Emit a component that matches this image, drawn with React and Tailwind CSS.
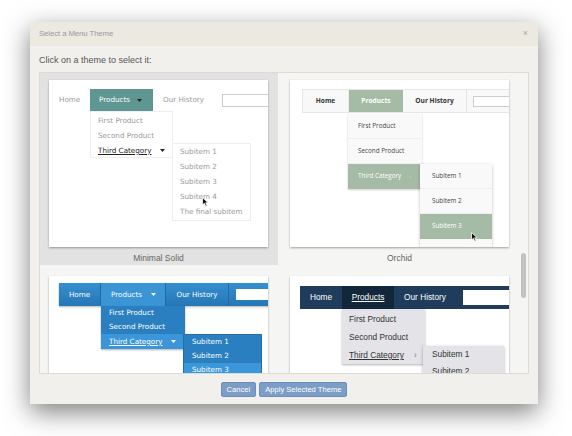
import React from "react";

const Cursor = ({ className }) => (
  <svg className={className} width="7" height="10" viewBox="0 0 7 10">
    <path d="M0.5 0.5 L0.5 8 L2.4 6.3 L3.7 9.3 L5 8.7 L3.7 5.8 L6.2 5.8 Z" fill="#111" stroke="#fff" strokeWidth="0.8" />
  </svg>
);

const Down = ({ color = "#333", className = "" }) => (
  <svg className={className} width="5" height="3" viewBox="0 0 5 3">
    <path d="M0 0 L5 0 L2.5 3 Z" fill={color} />
  </svg>
);

function MinimalSolid() {
  return (
    <div className="relative w-[219px] h-[167px] bg-white overflow-hidden shadow-[0_1px_2px_rgba(0,0,0,0.35)] font-['DejaVu_Sans',sans-serif] text-[7.2px] leading-none">
      <div className="flex items-center h-[22px] mt-[9px] pl-[10px]">
        <div className="w-[31px] shrink-0 text-[#999]">Home</div>
        <div className="w-[63px] shrink-0 h-full bg-[#5e9691] text-white flex items-center pl-[9px]">
          <span>Products</span>
          <Down color="#222" className="ml-[7px]" />
        </div>
        <div className="w-[69px] shrink-0 pl-[10px] text-[#999] whitespace-nowrap">Our History</div>
        <div className="w-[60px] shrink-0 h-[13px] border border-[#ccc] bg-white"></div>
      </div>
      <div className="absolute left-[41px] top-[31px] w-[83px] h-[47px] bg-white border border-[#eee] pt-[1px] text-[#999]">
        <div className="h-[15px] flex items-center pl-[7px]">First Product</div>
        <div className="h-[15px] flex items-center pl-[7px]">Second Product</div>
        <div className="h-[15px] flex items-center pl-[7px] text-[#222]">
          <span className="underline">Third Category</span>
          <Down color="#222" className="ml-[9px]" />
        </div>
      </div>
      <div className="absolute left-[123px] top-[63px] w-[79px] h-[78px] bg-white border border-[#eee] text-[#999]">
        <div className="h-[15px] flex items-center pl-[7px]">Subitem 1</div>
        <div className="h-[15px] flex items-center pl-[7px]">Subitem 2</div>
        <div className="h-[15px] flex items-center pl-[7px]">Subitem 3</div>
        <div className="h-[15px] flex items-center pl-[7px]">Subitem 4</div>
        <div className="h-[15px] flex items-center pl-[7px] whitespace-nowrap">The final subitem</div>
      </div>
      <Cursor className="absolute left-[153px] top-[117px]" />
    </div>
  );
}

function Orchid() {
  return (
    <div className="relative w-[219px] h-[167px] bg-white overflow-hidden shadow-[0_1px_2px_rgba(0,0,0,0.35)] font-['Open_Sans',sans-serif] text-[6.3px] leading-none">
      <div className="flex items-center h-[24px] mt-[9px] ml-[12px] w-[260px] bg-[#f8f8f8] border border-[#e6e6e6] font-bold text-[#333] text-[6.6px]">
        <div className="w-[46px] shrink-0 h-full flex items-center justify-center border-r border-[#ececec]">Home</div>
        <div className="w-[54px] shrink-0 h-full flex items-center justify-center bg-[#a5bba5] text-white">Products</div>
        <div className="w-[64px] shrink-0 h-full flex items-center justify-center border-r border-[#e6e6e6] whitespace-nowrap">Our History</div>
        <div className="ml-[6px] w-[60px] shrink-0 h-[11px] border border-[#ccc] bg-white"></div>
      </div>
      <div className="absolute left-[58px] top-[34px] w-[74px] bg-[#f9f9f9] shadow-[0_1px_2px_rgba(0,0,0,0.2)] text-[#444]">
        <div className="h-[25px] flex items-center pl-[10px] border-b border-[#eee]">First Product</div>
        <div className="h-[25px] flex items-center pl-[10px] border-b border-[#eee]">Second Product</div>
        <div className="h-[25px] flex items-center pl-[10px] bg-[#a5bba5] text-white">
          <span>Third Category</span>
          <span className="ml-[8px] text-[#d8e2d8] text-[5px]">›</span>
        </div>
      </div>
      <div className="absolute left-[130px] top-[84px] w-[72px] h-[83px] overflow-hidden bg-[#f9f9f9] shadow-[0_1px_3px_rgba(0,0,0,0.25)] text-[#444]">
        <div className="h-[25px] flex items-center pl-[12px] border-b border-[#eee]">Subitem 1</div>
        <div className="h-[25px] flex items-center pl-[12px] border-b border-[#eee]">Subitem 2</div>
        <div className="h-[25px] flex items-center pl-[12px] bg-[#a5bba5] text-white">Subitem 3</div>
      </div>
      <Cursor className="absolute left-[181px] top-[152px]" />
    </div>
  );
}

function BlueTheme() {
  return (
    <div className="relative w-[219px] h-[167px] bg-white overflow-hidden shadow-[0_1px_2px_rgba(0,0,0,0.35)] font-['DejaVu_Sans',sans-serif] text-[7.2px] leading-none text-white">
      <div className="flex items-center h-[23px] mt-[7px] ml-[10px] w-[260px] bg-gradient-to-b from-[#3590d0] to-[#2576b6] shadow-[0_1px_2px_rgba(0,0,0,0.3)]">
        <div className="w-[42px] shrink-0 h-full flex items-center justify-center border-r border-[#1f6aa3]">Home</div>
        <div className="w-[65px] shrink-0 h-full flex items-center pl-[10px] bg-[#3b95d5] border-r border-[#1f6aa3]">
          <span>Products</span>
          <Down color="#fff" className="ml-[9px]" />
        </div>
        <div className="w-[63px] shrink-0 h-full flex items-center justify-center border-r border-[#1f6aa3] whitespace-nowrap">Our History</div>
        <div className="ml-[7px] w-[60px] shrink-0 h-[11px] bg-white"></div>
      </div>
      <div className="absolute left-[52px] top-[30px] w-[84px] bg-[#2a7fc0] shadow-[0_1px_2px_rgba(0,0,0,0.3)]">
        <div className="h-[14px] flex items-center pl-[8px]">First Product</div>
        <div className="h-[14px] flex items-center pl-[8px]">Second Product</div>
        <div className="h-[15px] flex items-center pl-[8px] bg-[#3a96d8]">
          <span className="underline">Third Category</span>
          <Down color="#fff" className="ml-[9px]" />
        </div>
      </div>
      <div className="absolute left-[134px] top-[58px] w-[79px] h-[60px] bg-[#2a7fc0] border border-[#236fab]">
        <div className="h-[14px] flex items-center pl-[8px]">Subitem 1</div>
        <div className="h-[14px] flex items-center pl-[8px]">Subitem 2</div>
        <div className="h-[14px] flex items-center pl-[8px] bg-[#3a97da]">Subitem 3</div>
      </div>
    </div>
  );
}

function NavyTheme() {
  return (
    <div className="relative w-[219px] h-[167px] bg-white overflow-hidden shadow-[0_1px_2px_rgba(0,0,0,0.35)] font-['Liberation_Sans',Arial,sans-serif] text-[8.3px] leading-none text-white">
      <div className="flex items-center h-[23px] mt-[10px] ml-[10px] w-[260px] bg-[#1f3c5c]">
        <div className="w-[42px] shrink-0 h-full flex items-center pl-[10px]">Home</div>
        <div className="w-[52px] shrink-0 h-full flex items-center justify-center bg-[#12283a]">
          <span className="underline">Products</span>
        </div>
        <div className="w-[69px] shrink-0 h-full flex items-center pl-[10px] whitespace-nowrap">Our History</div>
        <div className="w-[60px] shrink-0 h-[15px] bg-white"></div>
      </div>
      <div className="absolute left-[52px] top-[33px] w-[83px] h-[55px] bg-[#e3e3e8] shadow-[0_1px_2px_rgba(0,0,0,0.3)] pt-[1px] text-[#333]">
        <div className="h-[18px] flex items-center pl-[7px]">First Product</div>
        <div className="h-[18px] flex items-center pl-[7px]">Second Product</div>
        <div className="h-[18px] flex items-center pl-[7px]">
          <span className="underline">Third Category</span>
          <span className="ml-[10px] text-[#999] font-bold">›</span>
        </div>
      </div>
      <div className="absolute left-[133px] top-[70px] w-[81px] h-[50px] bg-[#e3e3e8] shadow-[0_1px_3px_rgba(0,0,0,0.3)] text-[#333]">
        <div className="h-[17px] flex items-center pl-[9px]">Subitem 1</div>
        <div className="h-[17px] flex items-center pl-[9px]">Subitem 2</div>
      </div>
    </div>
  );
}

function Cell({ selected, label, children }) {
  return (
    <div className={`w-[238px] h-[192px] pt-[7px] pl-[9px] ${selected ? "bg-[#e2e2e2]" : ""}`}>
      {children}
      <div className="w-[219px] h-[18px] pt-[6px] text-center text-[8.5px] leading-[10px] text-[#666]">{label}</div>
    </div>
  );
}

export default function App() {
  return (
    <div className="w-[572px] h-[436px] bg-white pt-[22px] pl-[30px] font-['Liberation_Sans',Arial,sans-serif]">
      <div className="w-[508px] h-[382px] bg-[#f1f0ec] shadow-[0_8px_24px_rgba(0,0,0,0.5)] flex flex-col">
        <div className="h-[24px] shrink-0 bg-[#ebe9e0] flex items-center justify-between pl-[9px] pr-[10px]">
          <span className="text-[7.8px] text-[#9a9a9a] tracking-[-0.1px]">Select a Menu Theme</span>
          <span className="text-[9px] text-[#aaa]">×</span>
        </div>
        <div className="h-[26px] shrink-0 flex items-center pl-[9px] pt-[3px] text-[9px] text-[#555]">
          Click on a theme to select it:
        </div>
        <div className="mx-[9px] h-[302px] shrink-0 border border-[#dddbd4] bg-[#f5f5f3] relative overflow-hidden">
          <div className="grid grid-cols-[238px_238px] gap-x-[3px] gap-y-[4px]">
            <Cell selected label="Minimal Solid"><MinimalSolid /></Cell>
            <Cell label="Orchid"><Orchid /></Cell>
            <Cell label=""><BlueTheme /></Cell>
            <Cell label=""><NavyTheme /></Cell>
          </div>
          <div className="absolute right-[2px] top-[180px] w-[5px] h-[45px] rounded-full bg-[#c3c3c3]"></div>
        </div>
        <div className="flex-1 flex items-center justify-center gap-[3px] pt-[1px]">
          <button className="h-[15px] px-[5px] rounded-[2px] bg-[#7c9dc5] border border-[#6b8db7] text-white text-[7.6px] leading-none whitespace-nowrap">Cancel</button>
          <button className="h-[15px] px-[5px] rounded-[2px] bg-[#7c9dc5] border border-[#6b8db7] text-white text-[7.6px] leading-none whitespace-nowrap">Apply Selected Theme</button>
        </div>
      </div>
    </div>
  );
}
